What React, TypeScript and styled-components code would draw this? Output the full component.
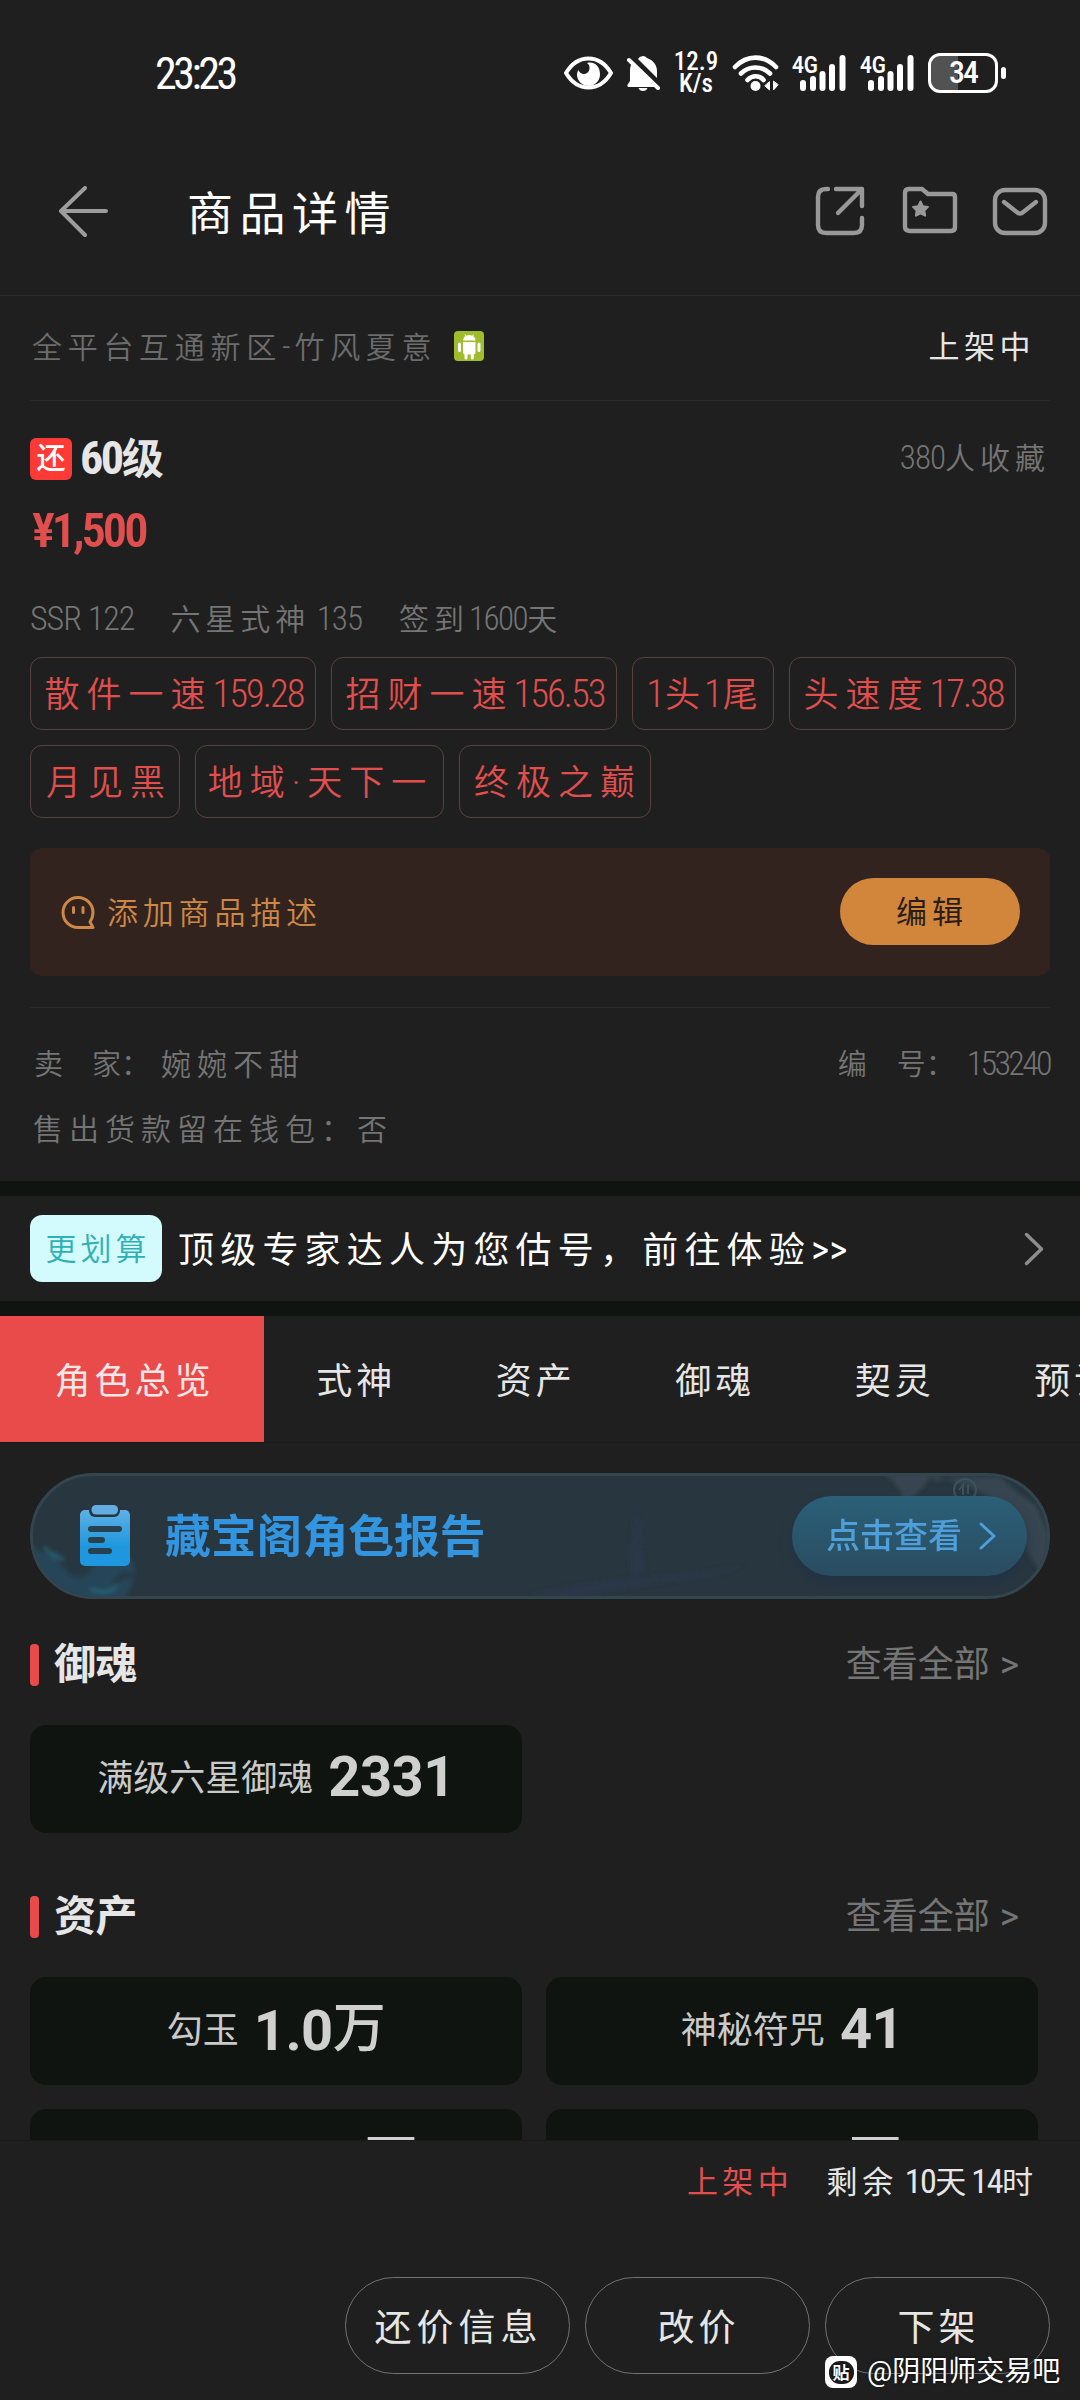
import React from "react";
import styled, { createGlobalStyle } from "styled-components";

const hand = `Roboto, "Noto Sans CJK SC", sans-serif`;

const Global = createGlobalStyle`
  * { box-sizing: border-box; }
  html, body { margin: 0; background: #1f1f1f; }
  body { font-family: ${hand}; color: #e6e6e6; }
`;

const Page = styled.div`
  width: 1080px;
  height: 2400px;
  position: relative;
  display: flex;
  flex-direction: column;
  overflow: hidden;
  background: #1f1f1f;
`;

const Txt = styled.span<{ $s: number; $ls?: number; $c?: string; $w?: number; $ml?: number; $top?: number }>`
  display: inline-block;
  font-size: ${(p) => p.$s}px;
  letter-spacing: ${(p) => p.$ls ?? 0}px;
  color: ${(p) => p.$c ?? "#e6e6e6"};
  font-weight: ${(p) => p.$w ?? 350};
  margin-left: ${(p) => p.$ml ?? 0}px;
  padding-top: ${(p) => p.$top ?? 0}px;
  line-height: 1.2;
  white-space: pre;
`;

const Num = styled.span<{ $ls?: number }>`
  font-size: 1.1em;
  line-height: 1;
  font-stretch: 75%;
  letter-spacing: ${(p) => p.$ls ?? -1.5}px;
`;

/* status bar */
const StatusBar = styled.div`
  flex: none;
  height: 130px;
  padding: 16px 74px 0 155px;
  display: flex;
  align-items: center;
`;
const StatusIcons = styled.div`
  margin-left: auto;
  display: flex;
  align-items: center;
`;
const Space = styled.i<{ $w: number }>`
  flex: none;
  width: ${(p) => p.$w}px;
`;
const Speed = styled.div`
  width: 46px;
  margin: 0 13px 0 13px;
  font: 500 25px/22px Roboto, sans-serif;
  font-stretch: 87%;
  color: #fff;
  text-align: center;
`;
const Battery = styled.div`
  position: relative;
  width: 70px;
  height: 40px;
  margin-right: 8px;
  border: 3px solid #fff;
  border-radius: 12px;
  display: flex;
  align-items: center;
  justify-content: center;
  background: linear-gradient(90deg, #525252 42%, transparent 42%);
  &::after {
    content: "";
    position: absolute;
    right: -11px;
    top: 11px;
    width: 5px;
    height: 12px;
    border-radius: 3px;
    background: #fff;
  }
`;

/* title bar */
const TitleBar = styled.header`
  flex: none;
  height: 166px;
  padding: 0 32px 0 58px;
  display: flex;
  align-items: center;
  border-bottom: 1px solid #2a2a2a;
`;
const Actions = styled.div`
  margin: -3px 0 0 auto;
  display: flex;
  align-items: center;
  gap: 34px;
`;

const Scroll = styled.main`
  flex: 1;
  min-height: 0;
  overflow: hidden;
`;
const Info = styled.section`
  padding: 0 30px;
`;
const Row = styled.div<{ $h: number; $mt?: number; $line?: boolean }>`
  height: ${(p) => p.$h}px;
  margin-top: ${(p) => p.$mt ?? 0}px;
  display: flex;
  align-items: center;
  border-bottom: ${(p) => (p.$line ? "1px solid #2a2a2a" : "none")};
`;
const Push = styled.div`
  margin-left: auto;
  display: flex;
  align-items: center;
`;
const Bargain = styled.div`
  width: 42px;
  height: 42px;
  border-radius: 6px;
  background: #fe3a36;
  display: flex;
  align-items: center;
  justify-content: center;
`;
const Tags = styled.div`
  margin-top: 17px;
  display: flex;
  flex-wrap: wrap;
  gap: 15px;
`;
const Tag = styled.div<{ $w: number }>`
  width: ${(p) => p.$w}px;
  height: 73px;
  padding: 4px 0 0 2px;
  border: 1px solid #57433f;
  border-radius: 12px;
  display: flex;
  align-items: center;
  justify-content: center;
`;
const Describe = styled.div`
  margin-top: 30px;
  height: 128px;
  padding: 0 30px 0 31px;
  border-radius: 12px;
  background: #32231f;
  display: flex;
  align-items: center;
`;
const EditButton = styled.button`
  margin-left: auto;
  margin-top: -1px;
  width: 180px;
  height: 67px;
  padding: 2px 0 0 4px;
  border: 0;
  border-radius: 34px;
  background: #d2863b;
  font-family: inherit;
`;
const Rule = styled.div`
  margin-top: 31px;
  height: 1px;
  background: #2a2a2a;
`;
const Band = styled.div<{ $mt?: number }>`
  height: 15px;
  margin-top: ${(p) => p.$mt ?? 0}px;
  background: #101411;
`;
const Promo = styled.div`
  height: 105px;
  padding: 0 35px 0 30px;
  display: flex;
  align-items: center;
`;
const PromoBadge = styled.div`
  width: 132px;
  height: 67px;
  padding: 3px 0 0 4px;
  border-radius: 12px;
  background: #d3fafc;
  display: flex;
  align-items: center;
  justify-content: center;
`;
const Tabs = styled.nav`
  height: 127px;
  display: flex;
  border-bottom: 1px solid #1a1a1a;
  overflow: hidden;
`;
const Tab = styled.div<{ $on?: boolean }>`
  flex: none;
  width: ${(p) => (p.$on ? 264 : 179.5)}px;
  height: 126px;
  padding: 7px 0 0 5px;
  display: flex;
  align-items: center;
  justify-content: center;
  background: ${(p) => (p.$on ? "#e84b4a" : "transparent")};
`;
const Report = styled.div`
  position: relative;
  margin: 30px 30px 0;
  height: 126px;
  padding: 0 20px 0 47px;
  border: 3px solid #33464f;
  border-radius: 63px;
  background: #28373f;
  overflow: hidden;
  display: flex;
  align-items: center;
`;
const Art = styled.svg`
  position: absolute;
  left: -3px;
  top: -3px;
`;
const ReportTitle = styled.h2`
  position: relative;
  margin: 5px 0 0 35px;
  font-size: 45.8px;
  font-weight: 700;
  line-height: 1.2;
  color: #3394e0;
`;
const ReportButton = styled.div`
  position: relative;
  margin-left: auto;
  width: 235px;
  height: 80px;
  border-radius: 40px;
  background: linear-gradient(#2a6078, #2a4c60);
  box-shadow: 0 8px 12px rgba(34, 50, 70, 0.8);
  display: flex;
  align-items: center;
  padding-left: 34px;
`;
const Heading = styled.div<{ $mt: number }>`
  height: 42px;
  margin: ${(p) => p.$mt}px 61px 0 30px;
  display: flex;
  align-items: center;
  &::before {
    content: "";
    width: 9px;
    height: 42px;
    border-radius: 4px;
    background: #e84b4a;
  }
`;
const Cards = styled.div`
  margin: 39px 42px 0 30px;
  display: grid;
  grid-template-columns: 492px 492px;
  gap: 24px;
`;
const Card = styled.div`
  height: 108px;
  border-radius: 16px;
  background: #101411;
  display: flex;
  align-items: center;
  justify-content: center;
  gap: 15px;
`;
const Value = styled.span<{ $unit: boolean }>`
  display: inline-flex;
  align-items: baseline;
  margin-top: ${(p) => (p.$unit ? 2 : -3)}px;
  font: 700 56px/1.2 Roboto, "Noto Sans CJK SC", sans-serif;
  letter-spacing: -0.5px;
  color: #d0d0d0;
`;
const Unit = styled.span`
  margin-bottom: 2px;
  transform: translateY(-3px);
  font-size: 53px;
  font-weight: 500;
`;

const Footer = styled.footer`
  flex: none;
  height: 260px;
  border-top: 1px solid #191919;
  background: #1f1f1f;
`;
const FooterStatus = styled.div`
  height: 84px;
  padding-right: 42px;
  display: flex;
  align-items: center;
  justify-content: flex-end;
`;
const Buttons = styled.div`
  margin-top: 52px;
  padding-right: 30px;
  display: flex;
  justify-content: flex-end;
  gap: 15px;
`;
const Pill = styled.button`
  width: 225px;
  height: 97px;
  padding: 7px 0 0 2px;
  border: 1px solid #727272;
  border-radius: 49px;
  background: transparent;
  font-family: inherit;
`;
const Watermark = styled.div`
  position: absolute;
  left: 825px;
  top: 2352px;
  height: 40px;
  display: flex;
  align-items: center;
  gap: 10px;
  text-shadow: 0 0 3px rgba(0, 0, 0, 0.7);
`;
const WatermarkIcon = styled.div`
  width: 32px;
  height: 32px;
  border-radius: 8px;
  background: #fff;
  display: flex;
  align-items: center;
  justify-content: center;
`;
const WatermarkDisc = styled.div`
  width: 25px;
  height: 23px;
  border-radius: 11px;
  background: #1c1c1c;
  font: 700 17px/22px "Noto Sans CJK SC", sans-serif;
  text-align: center;
  color: #fff;
`;

const Eye = () => (
  <svg width="49" height="34" viewBox="0 0 49 34" fill="none">
    <path d="M2 17C8 7 16 2.500 24.500 2.500S41 7 47 17C41 27 33 31.500 24.500 31.500S8 27 2 17Z" stroke="#fff" strokeWidth="4" strokeLinejoin="round" />
    <path d="M23 7C31 5 36 11 36 18a11.500 11.500 0 0 1-23 1c0-2 .5-4 1.500-5 2 6 10 5 11-1 .4-3-.8-5-2.500-6Z" fill="#fff" />
  </svg>
);
const BellOff = () => (
  <svg width="34" height="38" viewBox="0 0 34 38" fill="#fff">
    <path d="M12 5a5.500 5.500 0 0 1 9-1C27 6 31 11 31 17v7Z" />
    <path d="M4 9 29 33H3c-2 0-2-2-1-3l2-3V17c0-3 .5-5 1.500-7Z" />
    <path d="M3 6 32 34" stroke="#fff" strokeWidth="4" strokeLinecap="round" />
    <path d="M12.500 34h9c-1 4-8 4-9 0Z" />
  </svg>
);
const Wifi = () => (
  <svg width="48" height="38" viewBox="0 0 48 38" fill="none" stroke="#fff" strokeWidth="4.600" strokeLinecap="round">
    <path d="M3 13C15 .5 32 .5 44 13" />
    <path d="M9 19.500c8-8 21-8 29 0" />
    <path d="M15.500 26c4.500-5 12-5 16 0" />
    <circle cx="23.500" cy="32" r="5" fill="#fff" stroke="none" />
    <path d="M37.500 28v8l-4.500-4ZM41.500 27.500v8.500l4.500-5Z" strokeWidth="1" fill="#fff" />
  </svg>
);
const SignalSvg = styled.svg`
  overflow: visible;
`;
const Signal = () => (
  <SignalSvg width="55" height="38" viewBox="0 0 55 38" fill="#fff">
    <text x="0" y="19" fontFamily="Roboto, sans-serif" fontWeight="600" fontSize="24" textLength="26" lengthAdjust="spacingAndGlyphs">4G</text>
    <rect x="8" y="26" width="6" height="11" rx="3" />
    <rect x="18" y="22" width="6" height="15" rx="3" />
    <rect x="27.500" y="17" width="6" height="20" rx="3" />
    <rect x="37" y="10" width="6" height="27" rx="3" />
    <rect x="47.500" y="1" width="6" height="36" rx="3" />
  </SignalSvg>
);
const Back = () => (
  <svg width="52" height="54" viewBox="0 0 52 54" fill="none" stroke="#9d9d9d" strokeWidth="4" strokeLinecap="round" strokeLinejoin="round">
    <path d="M27 2 3 25 27 49M4 25H48" />
  </svg>
);
const Share = () => (
  <svg width="54" height="52" viewBox="0 0 54 52" fill="none" stroke="#999" strokeWidth="4.400" strokeLinecap="round" strokeLinejoin="round">
    <path d="M14 4H12Q4 4 4 12V40Q4 48 12 48H40Q48 48 48 40V33M22 4H48V21M47 5 24 28" />
  </svg>
);
const FolderStar = () => (
  <svg width="56" height="52" viewBox="0 0 56 52" fill="none" stroke="#999" strokeWidth="4.400" strokeLinejoin="round">
    <path d="M3 8Q3 4 7 4H20L26 9H50Q53 9 53 12V42Q53 46 49 46H8Q3 46 3 42Z" />
    <path d="m18.500 16.500 2.400 4.700 5.100.7-3.700 3.600.9 5.200-4.700-2.400-4.600 2.400.8-5.200-3.700-3.600 5.200-.7Z" fill="#999" strokeWidth="2" />
  </svg>
);
const Mail = () => (
  <svg width="56" height="52" viewBox="0 0 56 52" fill="none" stroke="#999" strokeWidth="4.400" strokeLinecap="round" strokeLinejoin="round">
    <rect x="3" y="5" width="50" height="43" rx="10" />
    <path d="M12 17 26 28Q28 29 30 28L44 17" />
  </svg>
);
const AndroidBadge = styled.svg`
  margin: -4px 0 0 17px;
`;
const Android = () => (
  <AndroidBadge width="30" height="30" viewBox="0 0 30 30">
    <rect width="30" height="30" rx="4" fill="#9fbc2c" />
    <path d="M9 9.500a6.200 5.500 0 0 1 12.500 0ZM9 11h12.500v10.500a2 2 0 0 1-2 2h-8.500a2 2 0 0 1-2-2Z" fill="#fff" />
    <path d="M11 3.500 12.500 6M19.500 3.500 18 6" stroke="#fff" strokeWidth="1" />
    <path d="M5.500 13v6.500M25 13v6.500M12 22v5M18.300 22v5" stroke="#fff" strokeWidth="3" strokeLinecap="round" />
  </AndroidBadge>
);
const Face = () => (
  <svg width="35" height="35" viewBox="0 0 35 35" fill="none" stroke="#cd8845" strokeWidth="3">
    <path d="M17 32.500A15 15 0 1 1 32 17C32 22 31 24 29 27L32 32.500Z" strokeLinejoin="round" />
    <path d="M12.500 12.500v5M22 12.500v5" strokeLinecap="round" />
  </svg>
);
const Chevron = ({ w, h, c, s }: { w: number; h: number; c: string; s: number }) => (
  <svg width={w} height={h} viewBox={`0 0 ${w} ${h}`} fill="none" stroke={c} strokeWidth={s} strokeLinecap="round" strokeLinejoin="round">
    <path d={`M${s} ${s}L${w - s} ${h / 2}L${s} ${h - s}`} />
  </svg>
);
const ClipSvg = styled.svg`
  position: relative;
`;
const Clipboard = () => (
  <ClipSvg width="50" height="62" viewBox="0 0 50 62">
    <defs>
      <linearGradient id="clip" x1="0" y1="0" x2="0" y2="1">
        <stop offset="0" stopColor="#5fb0e4" />
        <stop offset=".65" stopColor="#1f97de" />
      </linearGradient>
    </defs>
    <rect x="0" y="5" width="50" height="56" rx="5" fill="url(#clip)" />
    <rect x="9" y="-2" width="31" height="14" rx="6" fill="#28373f" />
    <rect x="11.500" y="0" width="26.500" height="9.500" rx="4.500" fill="#65ade0" />
    <path d="M11 24H39M11 35H22M11 46H29" stroke="#28414f" strokeWidth="6" strokeLinecap="round" />
  </ClipSvg>
);
const BannerArt = () => (
  <Art width="1020" height="126" viewBox="0 0 1020 126" fill="none">
    <defs>
      <filter id="soft" x="-10%" y="-10%" width="120%" height="120%"><feGaussianBlur stdDeviation="2" /></filter>
    </defs>
    <g filter="url(#soft)">
      <path d="M0 70C12 84 20 82 28 78C24 90 36 100 50 98C66 94 76 86 96 84C112 92 104 112 94 126H50C20 120 4 96 0 70Z" fill="#27506a" opacity=".6" />
      <path d="M14 74Q22 84 34 86M60 116Q82 124 88 110" stroke="#247486" strokeWidth="4" opacity=".6" />
      <path d="M38 96Q48 108 60 96M84 112Q92 98 104 104" stroke="#26353d" strokeWidth="6" opacity=".7" />
      <path d="M500 122Q560 108 620 104T714 92Q680 106 640 108Q580 118 530 126ZM604 42L600 96L606 106L616 94Q608 70 611 46Z" fill="#293748" />
      <path d="M854 0Q878 20 870 30Q890 24 902 0ZM898 0Q906 12 914 6L926 4H970L988 20L1006 32L1018 60V104Q1000 90 992 66L980 44L964 26L940 14Z" fill="#42545f" opacity=".55" />
    </g>
    <circle cx="935" cy="17" r="11" stroke="#3f515b" strokeWidth="2" />
    <path d="m929 17 4-5v10m5-10v9" stroke="#3f515b" strokeWidth="2" />
  </Art>
);

const RED = "#e04f4e";
const GREY = "#757575";

const SectionHead = ({ title, mt }: { title: string; mt: number }) => (
  <Heading $mt={mt}>
    <Txt $s={42} $w={700} $ml={15} $ls={-0.5}>{title}</Txt>
    <Push>
      <Txt $s={36} $w={400} $c={GREY} $top={2}>查看全部</Txt>
      <Txt $s={37} $w={400} $c={GREY} $ml={10}>&gt;</Txt>
    </Push>
  </Heading>
);

const Stat = ({ label, value, unit }: { label: string; value: string; unit?: string }) => (
  <Card>
    <Txt $s={36} $w={400} $c="#cacaca" $top={1}>{label}</Txt>
    <Value $unit={!!unit}>{value}{unit && <Unit>{unit}</Unit>}</Value>
  </Card>
);

export default function App() {
  return (
    <Page>
      <Global />
      <StatusBar>
        <Txt $s={40} $c="#fff" $w={400} $top={5}><Num $ls={-3.500}>23:23</Num></Txt>
        <StatusIcons>
          <Eye />
          <Space $w={13} />
          <BellOff />
          <Speed>12.9<br />K/s</Speed>
          <Wifi />
          <Space $w={12} />
          <Signal />
          <Space $w={13} />
          <Signal />
          <Space $w={13} />
          <Battery><Txt $s={29} $c="#fff" $w={500}><Num $ls={-2}>34</Num></Txt></Battery>
        </StatusIcons>
      </StatusBar>
      <TitleBar>
        <Back />
        <Txt $s={46} $ls={6.500} $c="#fff" $w={400} $ml={77} $top={5}>商品详情</Txt>
        <Actions><Share /><FolderStar /><Mail /></Actions>
      </TitleBar>
      <Scroll>
        <Info>
          <Row $h={105} $line>
            <Txt $s={30} $ls={5.700} $c="#6c6c6c" $ml={2}>全平台互通新区<Num $ls={4}>-</Num>竹风夏意</Txt>
            <Android />
            <Push><Txt $s={31} $ls={4.500} $w={400}>上架中</Txt><Space $w={15} /></Push>
          </Row>
          <Row $h={42} $mt={37}>
            <Bargain><Txt $s={29} $c="#fff" $w={500}>还</Txt></Bargain>
            <Txt $s={42} $w={700} $ml={8} $top={3}><Num $ls={-2.500}>60</Num>级</Txt>
            <Push><Txt $s={30} $ls={5} $c={GREY}><Num $ls={-1}>380</Num>人收藏</Txt></Push>
          </Row>
          <Row $h={44} $mt={29}>
            <Txt $s={44} $w={600} $c={RED} $ml={2} $top={3}><Num $ls={-3}>¥1,500</Num></Txt>
          </Row>
          <Row $h={40} $mt={47}>
            <Txt $s={31} $c={GREY}><Num $ls={-1}>SSR 122</Num></Txt>
            <Txt $s={30} $ls={5} $c={GREY} $ml={36}>六星式神<Num $ls={-1}> 135</Num></Txt>
            <Txt $s={30} $ls={5} $c={GREY} $ml={37}>签到<Num $ls={-1.500}>1600</Num>天</Txt>
          </Row>
          <Tags>
            <Tag $w={286}><Txt $s={35} $ls={7} $c={RED}>散件一速<Num $ls={-2}>159.28</Num></Txt></Tag>
            <Tag $w={286}><Txt $s={35} $ls={7} $c={RED}>招财一速<Num $ls={-2}>156.53</Num></Txt></Tag>
            <Tag $w={142}><Txt $s={35} $ls={4} $c={RED}><Num $ls={0}>1</Num>头<Num $ls={0}>1</Num>尾</Txt></Tag>
            <Tag $w={227}><Txt $s={35} $ls={7} $c={RED}>头速度<Num $ls={-2}>17.38</Num></Txt></Tag>
            <Tag $w={150}><Txt $s={35} $ls={7} $c={RED} $ml={6}>月见黑</Txt></Tag>
            <Tag $w={249}><Txt $s={35} $ls={7} $c={RED}>地域·天下一</Txt></Tag>
            <Tag $w={192}><Txt $s={35} $ls={7} $c={RED} $ml={4}>终极之巅</Txt></Tag>
          </Tags>
          <Describe>
            <Face />
            <Txt $s={31} $ls={4.800} $c="#cd8845" $ml={11} $top={3}>添加商品描述</Txt>
            <EditButton><Txt $s={31} $ls={5} $c="#2a1d17" $w={400}>编辑</Txt></EditButton>
          </Describe>
          <Rule />
          <Row $h={40} $mt={37}>
            <Txt $s={29} $c={GREY} $ml={4}>卖</Txt>
            <Txt $s={29} $c={GREY} $ml={29}>家：</Txt>
            <Txt $s={30} $ls={6} $c={GREY} $ml={11}>婉婉不甜</Txt>
            <Push>
              <Txt $s={29} $c={GREY}>编</Txt>
              <Txt $s={29} $c={GREY} $ml={30}>号：</Txt>
              <Txt $s={31} $c={GREY} $ml={12}><Num $ls={-2.700}>153240</Num></Txt>
            </Push>
          </Row>
          <Row $h={40} $mt={25}>
            <Txt $s={30} $ls={6} $c={GREY} $ml={3}>售出货款留在钱包：否</Txt>
          </Row>
        </Info>
        <Band $mt={31} />
        <Promo>
          <PromoBadge><Txt $s={31} $ls={4} $c="#2fb0b5">更划算</Txt></PromoBadge>
          <Txt $s={36} $ls={6.200} $c="#fff" $w={400} $ml={16} $top={7}>顶级专家达人为您估号，前往体验<Num $ls={0}>&gt;&gt;</Num></Txt>
          <Push><Chevron w={22} h={36} c="#8d8d8d" s={3.500} /></Push>
        </Promo>
        <Band />
        <Tabs>
          <Tab $on><Txt $s={36} $ls={4} $w={400} $c="#f3e6e6">角色总览</Txt></Tab>
          {["式神", "资产", "御魂", "契灵", "预设"].map((t) => (
            <Tab key={t}><Txt $s={36} $ls={4} $w={400}>{t}</Txt></Tab>
          ))}
        </Tabs>
        <Report>
          <BannerArt />
          <Clipboard />
          <ReportTitle>藏宝阁角色报告</ReportTitle>
          <ReportButton>
            <Txt $s={34} $w={500} $c="#4f9fdb" $top={1}>点击查看</Txt>
            <Space $w={16} />
            <Chevron w={19} h={30} c="#4f9fdb" s={3} />
          </ReportButton>
        </Report>
        <SectionHead title="御魂" mt={45} />
        <Cards><Stat label="满级六星御魂" value="2331" /></Cards>
        <SectionHead title="资产" mt={63} />
        <Cards>
          <Stat label="勾玉" value="1.0" unit="万" />
          <Stat label="神秘符咒" value="41" />
          <Stat label="金币" value="148.4" unit="万" />
          <Stat label="体力" value="1.2" unit="万" />
        </Cards>
      </Scroll>
      <Footer>
        <FooterStatus>
          <Txt $s={31} $ls={4.500} $w={400} $c={RED}>上架中</Txt>
          <Txt $s={31} $ls={5} $w={400} $ml={33}>剩余<Num> 10</Num>天<Num>14</Num>时</Txt>
        </FooterStatus>
        <Buttons>
          <Pill><Txt $s={37} $ls={5} $w={400}>还价信息</Txt></Pill>
          <Pill><Txt $s={37} $ls={4} $w={400}>改价</Txt></Pill>
          <Pill><Txt $s={37} $ls={4} $w={400}>下架</Txt></Pill>
        </Buttons>
      </Footer>
      <Watermark>
        <WatermarkIcon><WatermarkDisc>贴</WatermarkDisc></WatermarkIcon>
        <Txt $s={28} $w={400} $c="#fff">@阴阳师交易吧</Txt>
      </Watermark>
    </Page>
  );
}
